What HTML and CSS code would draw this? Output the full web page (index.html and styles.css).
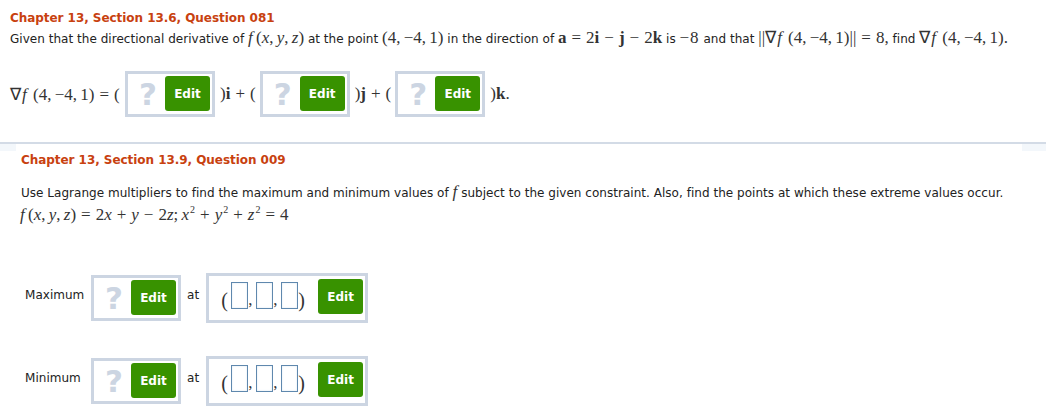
FILE: index.html
```html
<!DOCTYPE html>
<html>
<head>
    <title>Homework Questions</title>
    <link rel="stylesheet" href="styles.css">
</head>
<body>
    <div class="question first">
        <h2>Chapter 13, Section 13.6, Question 081</h2>
        <p class="prompt">Given that the directional derivative of <span class="math"><i>f</i> (<i>x</i>, <i>y</i>, <i>z</i>)</span> at the point <span class="math">(4, −4, 1)</span> in the direction of <span class="math"><b>a</b><span class="op">=</span>2<b>i</b><span class="op">−</span><b>j</b><span class="op">−</span>2<b>k</b></span> is <span class="math neg">−8</span> and that <span class="math">||<span class="grad">∇<i>f</i></span> (4, −4, 1)||<span class="op">=</span>8,</span> find <span class="math"><span class="grad">∇<i>f</i></span> (4, −4, 1).</span></p>
        <div class="answer-row math">
            <span class="term lead"><span class="grad">∇<i>f</i></span> (4, −4, 1)<span class="op">=</span>(</span>
            <div class="answer-box"><span class="mark">?</span><button type="button">Edit</button></div>
            <span class="term">)<b>i</b><span class="op">+</span>(</span>
            <div class="answer-box"><span class="mark">?</span><button type="button">Edit</button></div>
            <span class="term">)<b>j</b><span class="op">+</span>(</span>
            <div class="answer-box"><span class="mark">?</span><button type="button">Edit</button></div>
            <span class="term">)<b>k</b>.</span>
        </div>
    </div>

    <div class="question second">
        <h2>Chapter 13, Section 13.9, Question 009</h2>
        <p class="prompt">Use Lagrange multipliers to find the maximum and minimum values of <span class="math"><i>f</i></span> subject to the given constraint. Also, find the points at which these extreme values occur.</p>
        <p class="constraint math"><i>f</i> (<i>x</i>, <i>y</i>, <i>z</i>)<span class="op">=</span>2<i>x</i><span class="op">+</span><i>y</i><span class="op">−</span>2<i>z</i>; <i>x</i><sup>2</sup><span class="op">+</span><i>y</i><sup>2</sup><span class="op">+</span><i>z</i><sup>2</sup><span class="op">=</span>4</p>

        <div class="extreme-row">
            <span class="extreme-label">Maximum</span>
            <div class="answer-box"><span class="mark">?</span><button type="button">Edit</button></div>
            <span class="at">at</span>
            <div class="answer-box point">
                <span class="math paren">(</span><span class="blank"></span><span class="math comma">,</span><span class="blank"></span><span class="math comma">,</span><span class="blank"></span><span class="math paren">)</span>
                <button type="button">Edit</button>
            </div>
        </div>

        <div class="extreme-row">
            <span class="extreme-label">Minimum</span>
            <div class="answer-box"><span class="mark">?</span><button type="button">Edit</button></div>
            <span class="at">at</span>
            <div class="answer-box point">
                <span class="math paren">(</span><span class="blank"></span><span class="math comma">,</span><span class="blank"></span><span class="math comma">,</span><span class="blank"></span><span class="math paren">)</span>
                <button type="button">Edit</button>
            </div>
        </div>
    </div>
</body>
</html>
```

FILE: styles.css
```css
body {
    margin: 0;
    background-color: white;
    font-family: "DejaVu Sans", Verdana, sans-serif;
    font-size: 12px;
    letter-spacing: 0.03px;
    color: #222;
}
h2 {
    margin: 0;
    font-size: 12px;
    line-height: 16px;
    font-weight: bold;
    letter-spacing: -0.05px;
    color: #c8410f;
}
p {
    margin: 0;
}
.math {
    font-family: "Liberation Serif", "Times New Roman", serif;
    font-size: 17px;
    letter-spacing: 0;
    word-spacing: -1px;
    color: #333;
}
.op {
    margin: 0 5px;
}
.grad {
    margin-right: 2px;
    letter-spacing: 1px;
}
.neg {
    letter-spacing: 1px;
}
.question.first {
    padding: 10px 10px 0;
    height: 132px;
}
.question.second {
    padding: 8px 21px 0;
    border-top: 2px solid #d3dbe6;
    background:
        linear-gradient(#f3f7fb, #f3f7fb) left top / 16px 7px no-repeat,
        linear-gradient(#f3f7fb, #f3f7fb) right top / 24px 7px no-repeat;
}
.prompt {
    line-height: 20px;
    white-space: nowrap;
}
.first .prompt {
    margin-top: 2px;
}
.second .prompt {
    margin-top: 14px;
}
.answer-row {
    display: flex;
    align-items: center;
    margin-top: 22px;
}
.term {
    white-space: pre;
    margin: 0 4px 0 5px;
}
.term.lead {
    width: 111px;
    margin: 0 4px 0 0;
}
.answer-box {
    display: flex;
    align-items: center;
    justify-content: space-between;
    box-sizing: border-box;
    width: 90px;
    height: 46px;
    padding: 0 2px 0 11px;
    border: 3px solid #ccd5e2;
    background-color: white;
}
.mark {
    font-family: "DejaVu Sans", Verdana, sans-serif;
    font-weight: bold;
    font-size: 31px;
    letter-spacing: 0;
    color: #ccd5e2;
}
button {
    width: 45px;
    height: 35px;
    margin-bottom: 1px;
    padding: 0;
    border: none;
    border-radius: 3px;
    background-color: #389200;
    color: white;
    font-family: "DejaVu Sans", Verdana, sans-serif;
    font-size: 12px;
    font-weight: bold;
}
.constraint {
    margin: -1px 0 0 -1px;
    line-height: 26px;
}
.constraint sup {
    margin-left: 1px;
    font-size: 10px;
    line-height: 0;
}
.extreme-row {
    display: flex;
    align-items: center;
    margin-top: 33px;
}
.constraint + .extreme-row {
    margin-top: 45px;
}
.extreme-label {
    width: 66px;
    margin: 0 0 6px 4px;
}
.at {
    margin: 0 7px 6px 6px;
}
.answer-box.point {
    width: 162px;
    height: 50px;
    padding: 0 2px 0 12px;
    justify-content: flex-start;
}
.point button {
    margin-left: auto;
    margin-bottom: 3px;
}
.blank {
    box-sizing: border-box;
    width: 17px;
    height: 27px;
    margin-bottom: 5px;
    border: 1px solid #5f88ae;
    box-shadow: inset 0 0 2px #d5e3ef;
}
.paren {
    width: 10px;
    font-size: 20px;
    margin-top: 4px;
}
.paren:last-of-type {
    width: auto;
}
.comma {
    width: 8px;
    margin-top: 4px;
}
```
